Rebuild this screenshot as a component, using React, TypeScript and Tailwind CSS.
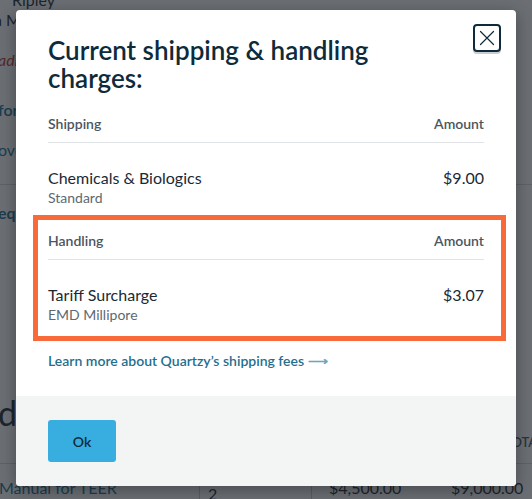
import React from 'react';

const font = { fontFamily: "'Lato', 'Liberation Sans', sans-serif" };

function CloseIcon() {
  return (
    <svg width="16" height="16" viewBox="0 0 16 16" fill="none">
      <path d="M1.5 1.5L14.5 14.5M14.5 1.5L1.5 14.5" stroke="#0d2b3a" strokeWidth="1.2" strokeLinecap="round" />
    </svg>
  );
}

function ChargeSection({ title, name, detail, amount }: { title: string; name: string; detail: string; amount: string }) {
  return (
    <div>
      <div className="flex justify-between border-b border-[#e1e4e6] pb-2 text-[14px] font-semibold leading-[20px] text-[#4b5560]">
        <span>{title}</span>
        <span>Amount</span>
      </div>
      <div className="flex justify-between pt-6">
        <div>
          <div className="text-[16px] leading-[22px] text-[#1a2a35]">{name}</div>
          <div className="text-[14px] leading-[18px] text-[#5e6870]">{detail}</div>
        </div>
        <div className="text-[16px] leading-[22px] text-[#1a2a35]">{amount}</div>
      </div>
    </div>
  );
}

export default function App() {
  return (
    <div className="relative h-[499px] w-[532px] overflow-hidden bg-white" style={font}>
      {/* page behind the dialog */}
      <div className="flex flex-col text-[16px] text-[#1f2a33]">
        <div className="-mt-[10px] pl-[12px] leading-[20px]">Ripley</div>
        <div className="-ml-[6px] leading-[20px]">a Merck</div>
        <div className="mt-[20px] -ml-[2px] italic leading-[20px] text-[#c0392b]">adress</div>
        <div className="mt-[30px] -ml-[2px] font-semibold leading-[20px] text-[#1d6f8f]">for more</div>
        <div className="mt-[20px] -ml-[2px] leading-[20px] text-[#1d6f8f]">overview</div>
        <div className="mt-[24px] border-t border-[#d5d9dc]" />
        <div className="mt-[18px] -ml-[2px] font-bold leading-[20px] text-[#1d6f8f]">equest</div>
        <div className="mt-[170px] -ml-[2px] text-[34px] leading-[40px]">d</div>
        <div className="flex justify-end text-[13px] font-semibold leading-[18px] text-[#4b5560]">
          <span className="-mr-[12px]">TOTAL</span>
        </div>
        <div className="mt-[12px] flex items-start border-t border-[#d5d9dc] pt-[14px]">
          <span className="-ml-[1px] w-[200px] leading-[20px] text-[#1d6f8f]">Manual for TEER</span>
          <span className="-mt-[3px] h-[40px] w-[113px] rounded-[3px] border border-[#c8cdd0] px-2 pt-[8px] leading-[20px]">2</span>
          <span className="ml-[17px] w-[122px] leading-[20px]">$4,500.00</span>
          <span className="leading-[20px]">$9,000.00</span>
        </div>
      </div>

      {/* overlay */}
      <div className="absolute inset-0 bg-[#1c222a]/65" />

      {/* dialog */}
      <div className="absolute left-[16px] top-[10px] w-[500px] overflow-hidden rounded-[4px] bg-white shadow-[0_4px_16px_rgba(0,0,0,0.35)]">
        <div className="relative px-8 pb-[25px] pt-[26px]">
          <button className="absolute right-[15px] top-[14px] flex h-[28px] w-[28px] items-center justify-center rounded-[4px] border-2 border-[#0d2b3a] bg-white shadow-[0_2px_0_#c9ced1]">
            <CloseIcon />
          </button>
          <h2 className="w-[380px] text-[26px] font-semibold leading-[28px] text-[#0d2b3a]">
            Current shipping &amp; handling charges:
          </h2>

          <div className="mt-[22px]">
            <ChargeSection title="Shipping" name="Chemicals & Biologics" detail="Standard" amount="$9.00" />
          </div>

          <div className="mt-2 -ml-[15px] -mr-[22px] border-[5px] border-[#f96a3a] pb-[12px] pl-[10px] pr-[17px] pt-[11px]">
            <ChargeSection title="Handling" name="Tariff Surcharge" detail="EMD Millipore" amount="$3.07" />
          </div>

          <a className="mt-[10px] block text-[14px] font-semibold leading-[20px] text-[#1f6f8f]" href="#">
            Learn more about Quartzy’s shipping fees <span className="text-[#6fa6bd]">⟶</span>
          </a>
        </div>

        <div className="bg-[#f3f5f5] px-8 py-6">
          <button className="h-[42px] w-[68px] rounded-[3px] bg-[#38ade0] text-[14px] font-semibold text-[#0d2b3a]">
            Ok
          </button>
        </div>
      </div>
    </div>
  );
}
